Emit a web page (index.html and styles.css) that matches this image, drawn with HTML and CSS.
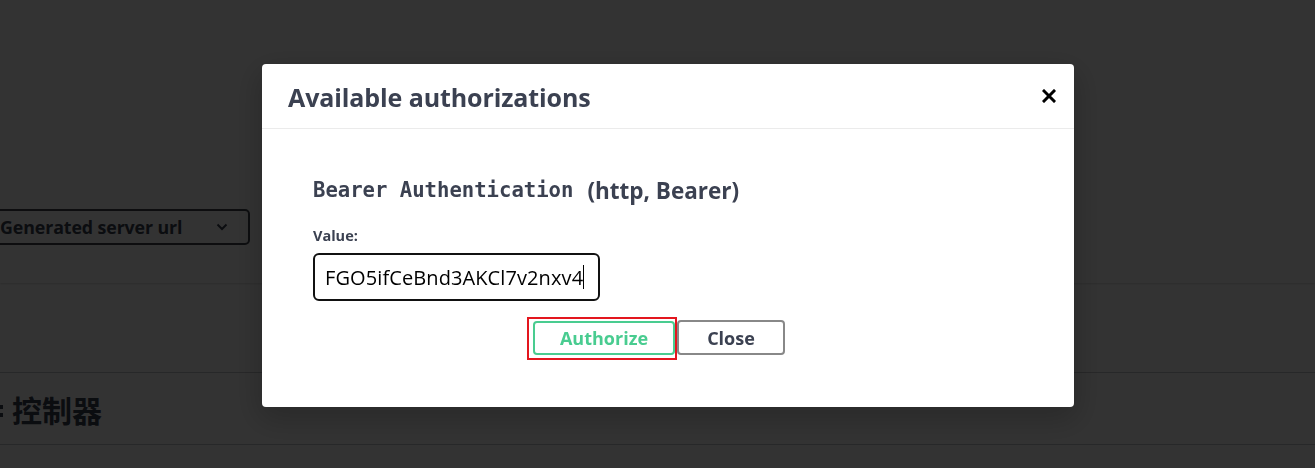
FILE: index.html
```html
<!DOCTYPE html>
<html lang="en">
<head>
<meta charset="utf-8">
<title>Available authorizations</title>
<link rel="stylesheet" href="styles.css">
</head>
<body>
<div class="page">
  <div class="info"></div>
  <section class="scheme-container">
    <div class="servers">
      <div class="select">
        <span class="select-text">Generated server url</span>
        <svg class="chev" width="12" height="8" viewBox="0 0 12 8"><path d="M1.5 1.5 L6 6 L10.5 1.5" fill="none" stroke="#3b4151" stroke-width="2"/></svg>
      </div>
    </div>
  </section>
  <div class="filter"></div>
  <h3 class="opblock-tag"><span class="tag-mark"></span>控制器</h3>
</div>

<div class="overlay">
  <div class="modal">
    <div class="modal-header">
      <h3 class="modal-title">Available authorizations</h3>
      <button class="close-x" type="button" aria-label="Close">
        <svg width="14" height="14" viewBox="0 0 14 14"><path d="M2 2 L12 12 M12 2 L2 12" stroke="#000" stroke-width="3" stroke-linecap="square"/></svg>
      </button>
    </div>
    <div class="modal-body">
      <h4 class="scheme-title"><code class="scheme-code">Bearer Authentication</code><span class="scheme-kind">(http, Bearer)</span></h4>
      <label class="value-label" for="token">Value:</label>
      <div class="input-box"><span class="input-text">FGO5ifCeBnd3AKCl7v2nxv4</span><span class="caret"></span></div>
      <div class="btn-row">
        <span class="focus-mark"><button class="btn btn-authorize" type="button">Authorize</button></span>
        <button class="btn btn-close" type="button">Close</button>
      </div>
    </div>
  </div>
</div>
</body>
</html>
```

FILE: styles.css
```css
* { box-sizing: border-box; }

html, body {
  margin: 0;
  padding: 0;
  height: 100%;
  overflow: hidden;
  background: #ffffff;
  font-family: "Open Sans", "Noto Sans", "Noto Sans CJK SC", sans-serif;
  color: #3b4151;
}

.page {
  width: 100%;
}

.info {
  height: 146px;
}

.scheme-container {
  height: 137px;
  background: #fff;
  box-shadow: 0 1px 2px 0 rgba(0, 0, 0, 0.15);
  padding-top: 63px;
}

.servers {
  display: flex;
}

.select {
  margin-left: -12px;
  width: 262px;
  height: 36px;
  border: 2px solid #41444e;
  border-radius: 5px;
  display: flex;
  align-items: center;
  justify-content: space-between;
  padding: 0 20px 0 10px;
}

.select-text {
  font-size: 17.8px;
  font-weight: 700;
  color: #3b4151;
  letter-spacing: -0.1px;
}

.chev { display: block; }

.filter {
  height: 90px;
  border-bottom: 1px solid rgba(59, 65, 81, 0.3);
}

.opblock-tag {
  margin: 0;
  height: 72px;
  display: flex;
  align-items: center;
  padding: 0 0 0 12px;
  font-size: 30px;
  font-weight: 700;
  font-family: "Noto Sans CJK SC", "Open Sans", sans-serif;
  color: #3b4151;
  border-bottom: 1px solid rgba(59, 65, 81, 0.3);
  position: relative;
}

.tag-mark {
  position: absolute;
  left: 0;
  top: 32px;
  width: 4px;
  height: 12px;
  border-left: 3px dotted #3b4151;
}

.overlay {
  position: fixed;
  inset: 0;
  background: rgba(0, 0, 0, 0.8);
  padding: 64px 0 0 262px;
}

.modal {
  width: 812px;
  height: 343px;
  background: #fff;
  border-radius: 4px;
  box-shadow: 0 10px 30px 4px rgba(0, 0, 0, 0.2);
  display: flex;
  flex-direction: column;
}

.modal-header {
  height: 65px;
  border-bottom: 1px solid #ebebeb;
  display: flex;
  align-items: center;
  padding: 0 18px 0 26px;
}

.modal-title {
  flex: 1;
  margin: 0;
  font-size: 25px;
  font-weight: 700;
  color: #3b4151;
  letter-spacing: -0.1px;
  padding-top: 1px;
}

.close-x {
  border: 0;
  background: none;
  padding: 0;
  width: 14px;
  height: 14px;
  display: flex;
  margin-bottom: 1px;
}

.modal-body {
  padding: 46px 69px 0 51px;
}

.scheme-title {
  margin: 0;
  height: 30px;
  display: flex;
  align-items: center;
  gap: 14px;
  color: #3b4151;
}

.scheme-code {
  font-family: "DejaVu Sans Mono", monospace;
  font-size: 20.6px;
  font-weight: 700;
  color: #3b4151;
}

.scheme-kind {
  font-family: "Open Sans", sans-serif;
  font-size: 22.5px;
  font-weight: 700;
  color: #3b4151;
}

.value-label {
  display: block;
  margin-top: 21px;
  height: 20px;
  line-height: 20px;
  font-size: 14.5px;
  font-weight: 700;
  color: #3b4151;
}

.input-box {
  margin-top: 7px;
  width: 287px;
  height: 48px;
  border: 2px solid #111;
  border-radius: 6px;
  display: flex;
  align-items: center;
  padding-left: 10px;
}

.input-text {
  font-size: 20px;
  color: #000;
  letter-spacing: 0.1px;
}

.caret {
  width: 1px;
  height: 24px;
  background: #000;
  margin-left: 0;
}

.btn-row {
  margin-top: 19px;
  display: flex;
  justify-content: center;
  align-items: center;
  gap: 2px;
}

.focus-mark {
  position: relative;
  display: flex;
}

.focus-mark::after {
  content: "";
  position: absolute;
  left: -6px;
  top: -4px;
  right: -2px;
  bottom: -5px;
  border: 2px solid #e3161e;
  pointer-events: none;
}

.btn {
  font-family: "Open Sans", sans-serif;
  font-size: 18px;
  font-weight: 700;
  border-radius: 4px;
  background: transparent;
  padding: 0;
  height: 34px;
  display: flex;
  align-items: center;
  justify-content: center;
}

.btn-authorize {
  width: 142px;
  border: 2px solid #49cc90;
  color: #49cc90;
}

.btn-close {
  width: 108px;
  height: 35px;
  border: 2px solid #888;
  color: #3b4151;
}
```
